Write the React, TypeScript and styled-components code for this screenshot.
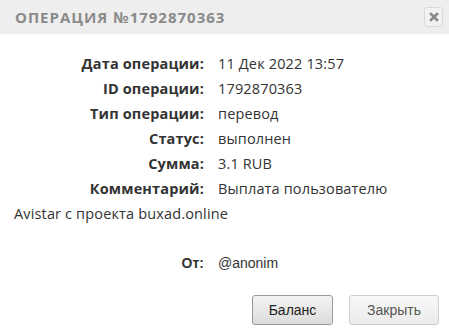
import React from "react";
import styled, { createGlobalStyle } from "styled-components";

const GlobalStyle = createGlobalStyle`
  html, body {
    margin: 0;
    padding: 0;
    background: #fff;
  }
  body {
    width: 449px;
    height: 335px;
    overflow: hidden;
    font-family: "Open Sans", "Noto Sans", sans-serif;
    color: #333;
  }
`;

const Dialog = styled.div`
  width: 449px;
  height: 335px;
  display: flex;
  flex-direction: column;
  background: #fff;
`;

const Header = styled.div`
  height: 34px;
  background: #eeeeee;
  display: flex;
  align-items: center;
  justify-content: space-between;
  padding: 0 6px 0 15px;
`;

const Title = styled.div`
  font-family: "Open Sans", sans-serif;
  font-weight: 700;
  font-size: 15px;
  letter-spacing: 1px;
  color: #8a8a8a;
  text-transform: uppercase;
`;

const CloseButton = styled.button`
  width: 19px;
  height: 20px;
  padding: 0;
  border: 1px solid #d9d9d9;
  border-radius: 3px;
  background: #f2f2f2;
  display: flex;
  align-items: center;
  justify-content: center;
  cursor: pointer;
`;

const Body = styled.div`
  padding: 17px 14px 0 14px;
  line-height: 25px;
`;

const Row = styled.div<{ $plain?: boolean }>`
  font-family: ${(p) =>
    p.$plain ? `"Liberation Sans", Arial, sans-serif` : `"Open Sans", sans-serif`};
  font-size: ${(p) => (p.$plain ? "14px" : "14.5px")};
  letter-spacing: ${(p) => (p.$plain ? "0" : "0.15px")};
`;

const Label = styled.span`
  display: inline-block;
  width: 190px;
  text-align: right;
  font-weight: 700;
  margin-right: 14px;
  color: #333;
`;

const Value = styled.span`
  color: #333;
`;

const Spacer = styled.div`
  height: 25px;
`;

const Footer = styled.div`
  margin-top: auto;
  display: flex;
  justify-content: flex-end;
  gap: 16px;
  padding: 0 10px 10px 0;
`;

const Button = styled.button<{ $primary?: boolean }>`
  height: 30px;
  padding: 0 14px;
  min-width: ${(p) => (p.$primary ? "81px" : "90px")};
  font-family: "Liberation Sans", Arial, sans-serif;
  font-size: 14px;
  color: ${(p) => (p.$primary ? "#222" : "#555")};
  border: 1px solid ${(p) => (p.$primary ? "#9a9a9a" : "#cfcfcf")};
  border-radius: 3px;
  background: ${(p) =>
    p.$primary
      ? "linear-gradient(#f4f4f4, #dcdcdc)"
      : "linear-gradient(#f8f8f8, #ebebeb)"};
  cursor: pointer;
`;

const rows: [string, string][] = [
  ["Дата операции:", "11 Дек 2022 13:57"],
  ["ID операции:", "1792870363"],
  ["Тип операции:", "перевод"],
  ["Статус:", "выполнен"],
  ["Сумма:", "3.1 RUB"],
  ["Комментарий:", "Выплата пользователю Avistar с проекта buxad.online"],
];

const App: React.FC = () => {
  return (
    <Dialog>
      <GlobalStyle />
      <Header>
        <Title>Операция №1792870363</Title>
        <CloseButton aria-label="close">
          <svg width="10" height="10" viewBox="0 0 10 10">
            <path d="M2 2 L8 8 M8 2 L2 8" stroke="#888" strokeWidth="2.6" strokeLinecap="square" />
          </svg>
        </CloseButton>
      </Header>
      <Body>
        {rows.map(([label, value]) => (
          <Row key={label}>
            <Label>{label}</Label>
            <Value>{value}</Value>
          </Row>
        ))}
        <Spacer />
        <Row $plain>
          <Label>От:</Label>
          <Value>@anonim</Value>
        </Row>
      </Body>
      <Footer>
        <Button $primary>Баланс</Button>
        <Button>Закрыть</Button>
      </Footer>
    </Dialog>
  );
};

export default App;
